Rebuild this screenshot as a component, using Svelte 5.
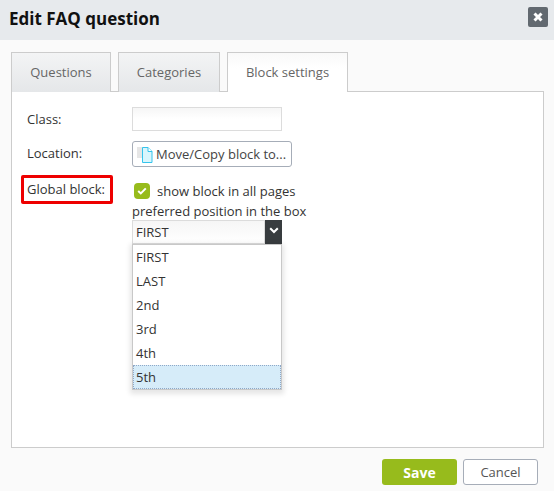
<script>
	const tabs = ['Questions', 'Categories', 'Block settings'];
	const positions = ['FIRST', 'LAST', '2nd', '3rd', '4th', '5th'];
	let active = 2;
	let highlighted = '5th';
</script>

<div class="dialog">
	<header>
		<h1>Edit FAQ question</h1>
		<button class="close" aria-label="Close">
			<svg width="10" height="10" viewBox="0 0 10 10"><path d="M1.5 1.5 L8.5 8.5 M8.5 1.5 L1.5 8.5" stroke="#fff" stroke-width="3" /></svg>
		</button>
	</header>

	<div class="content">
		<div class="tabs">
			{#each tabs as tab, i}
				<div class="tab" class:active={i === active}>{tab}</div>
			{/each}
		</div>

		<div class="panel">
			<div class="row class-row">
				<span class="label">Class:</span>
				<input type="text" />
			</div>
			<div class="row location-row">
				<span class="label">Location:</span>
				<button class="move">
					<svg width="16" height="18" viewBox="0 0 16 18">
						<rect x="0" y="2" width="6" height="11" fill="#e6e6e6" />
						<path d="M5.5 2.5 H11 L15 6.5 V17.5 H5.5 Z" fill="#d9f6fd" stroke="#35c4ec" />
						<path d="M11 2.5 V6.5 H15" fill="#fff" stroke="#35c4ec" />
					</svg>
					Move/Copy block to...
				</button>
			</div>
			<div class="row global-row">
				<span class="label boxed">Global block:</span>
				<div class="global">
					<div class="check-line">
						<span class="check">
							<svg width="10" height="8" viewBox="0 0 10 8"><path d="M1.2 4 L3.8 6.4 L8.8 1.4" fill="none" stroke="#fff" stroke-width="2" /></svg>
						</span>
						show block in all pages
					</div>
					<div class="pref">preferred position in the box</div>
					<div class="select">
						<div class="value">FIRST</div>
						<div class="arrow">
							<svg width="10" height="7" viewBox="0 0 10 7"><path d="M1.2 1.2 L5 5 L8.8 1.2" fill="none" stroke="#fff" stroke-width="2" /></svg>
						</div>
						<ul>
							{#each positions as pos}
								<li class:current={pos === highlighted}>{pos}</li>
							{/each}
						</ul>
					</div>
				</div>
			</div>
		</div>

		<footer>
			<button class="save">Save</button>
			<button class="cancel">Cancel</button>
		</footer>
	</div>
</div>

<style>
	:global(body) {
		margin: 0;
		background: #fafafa;
	}
	.dialog {
		width: 554px;
		height: 491px;
		display: flex;
		flex-direction: column;
		font-family: "Open Sans", sans-serif;
		font-size: 13px;
		color: #333;
		background: #fafafa;
		overflow: hidden;
	}
	header {
		height: 40px;
		flex: none;
		box-sizing: border-box;
		background: #e7eaed;
		display: flex;
		align-items: flex-start;
		justify-content: space-between;
		padding: 7px 6px 0 9px;
	}
	h1 {
		margin: 0;
		font-size: 17px;
		line-height: 23px;
		font-weight: 700;
		color: #111;
	}
	.close {
		width: 20px;
		height: 20px;
		padding: 0;
		border: 0;
		border-radius: 2px;
		background: #626970;
		display: flex;
		align-items: center;
		justify-content: center;
	}
	.content {
		flex: 1;
		display: flex;
		flex-direction: column;
		padding: 12px 10px 6px 11px;
	}
	.tabs {
		display: flex;
		gap: 7px;
		height: 40px;
		flex: none;
		position: relative;
		z-index: 1;
	}
	.tab {
		box-sizing: border-box;
		width: 100px;
		text-align: center;
		border: 1px solid #ccc;
		border-bottom: 0;
		background: linear-gradient(#f3f4f5, #e5e7e9);
		color: #666;
		line-height: 39px;
	}
	.tab:nth-child(2) {
		width: 102px;
	}
	.tab:nth-child(3) {
		width: 121px;
	}
	.tab.active {
		background: linear-gradient(#f9f9f9, #fff 40%);
	}
	.panel {
		height: 357px;
		flex: none;
		box-sizing: border-box;
		border: 1px solid #ccc;
		background: #fff;
		margin-top: -1px;
		padding: 15px 15px 0;
	}
	.row {
		display: flex;
		align-items: flex-start;
	}
	.label {
		width: 105px;
		flex: none;
		line-height: 24px;
	}
	.class-row {
		height: 24px;
	}
	.class-row input {
		width: 150px;
		height: 24px;
		box-sizing: border-box;
		border: 1px solid #dcdcdc;
		background: linear-gradient(#f6f6f6, #fff 50%);
		margin: 0;
		padding: 0;
	}
	.location-row {
		margin-top: 10px;
		height: 26px;
	}
	.move {
		width: 160px;
		height: 26px;
		padding: 0 0 0 4px;
		border: 1px solid #a6adb8;
		border-radius: 3px;
		background: #fff;
		font: inherit;
		color: #444;
		display: flex;
		align-items: center;
		gap: 3px;
		white-space: nowrap;
	}
	.global-row {
		margin-top: 8px;
	}
	.boxed {
		box-sizing: border-box;
		width: 92px;
		height: 29px;
		border: 3px solid #ee0000;
		border-radius: 2px;
		margin: 0 19px 0 -6px;
		padding-left: 3px;
		line-height: 22px;
		background: #fff;
	}
	.global {
		width: 220px;
	}
	.check-line {
		height: 24px;
		margin-top: 4px;
		padding-left: 2px;
		line-height: 22px;
		display: flex;
		align-items: center;
		gap: 7px;
	}
	.check {
		width: 16px;
		height: 16px;
		border-radius: 4px;
		background: #97bb1c;
		display: flex;
		align-items: center;
		justify-content: center;
	}
	.pref {
		line-height: 18px;
		margin-top: -1px;
	}
	.select {
		position: relative;
		width: 150px;
		height: 24px;
		display: flex;
	}
	.value {
		flex: 1;
		box-sizing: border-box;
		border: 1px solid #dcdcdc;
		background: linear-gradient(#f6f6f6, #fff);
		padding-left: 3px;
		line-height: 22px;
	}
	.arrow {
		width: 17px;
		background: #383c3f;
		display: flex;
		align-items: center;
		justify-content: center;
		padding-bottom: 3px;
		box-sizing: border-box;
	}
	ul {
		position: absolute;
		left: 0;
		top: 24px;
		width: 150px;
		box-sizing: border-box;
		margin: 0;
		padding: 0;
		list-style: none;
		background: #fff;
		border: 1px solid #c8c8c8;
		box-shadow: 0 2px 5px 2px rgba(0, 0, 0, 0.1);
	}
	li {
		height: 24px;
		line-height: 24px;
		padding-left: 3px;
	}
	li.current {
		background: #d6ecf9;
		outline: 1px dotted #8fa8c8;
		outline-offset: -1px;
	}
	footer {
		flex: 1;
		display: flex;
		justify-content: flex-end;
		align-items: flex-end;
		gap: 6px;
		padding-right: 6px;
	}
	footer button {
		width: 75px;
		height: 26px;
		padding: 0;
		border-radius: 3px;
		font: inherit;
	}
	.save {
		background: #97bb1c;
		border: 0;
		color: #fff;
		font-weight: 700;
		font-size: 14px;
	}
	.cancel {
		background: #fff;
		border: 1px solid #a6adb8;
		color: #555;
	}
</style>
